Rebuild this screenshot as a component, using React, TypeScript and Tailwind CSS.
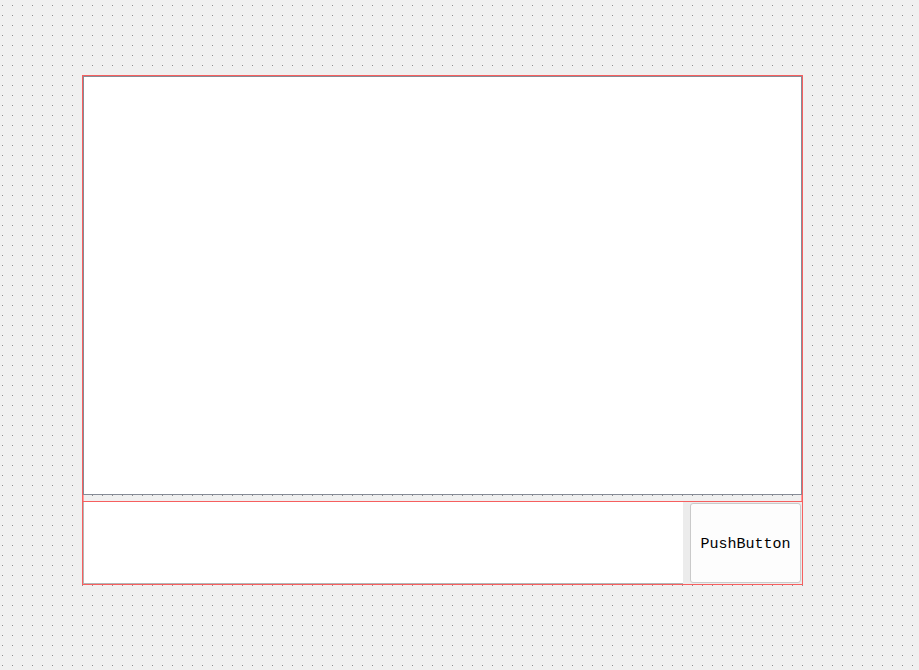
export default function App() {
  return (
    <div className="h-[670px] w-full overflow-hidden bg-[#f0f0f0] bg-[radial-gradient(circle_at_0.5px_0.5px,#8e8e8e_0.75px,transparent_0.75px)] bg-[size:10px_10px] bg-[position:2px_5px] pt-[75px] pl-[82px]">
      <div className="flex h-[510px] w-[721px] flex-col border border-[#f65f5f] shadow-[inset_1px_0_0_#ff9c9c,inset_-1px_0_0_#ff9c9c]">
        {/* text edit */}
        <div className="h-[419px] border border-[#868b96] bg-white" />
        <div className="h-[6px]" />
        {/* horizontal layout */}
        <div className="flex flex-1 border-t border-[#f65f5f]">
          <div className="w-[600px] border-b border-l border-[#b4b4b4] bg-white" />
          <div className="flex flex-1 bg-[#ececec] py-px pl-[7px] pr-px">
            <button className="flex w-[111px] items-center justify-center rounded-[3px] border border-[#cacaca] bg-[#fdfdfd] pt-[5px] font-['Liberation_Mono',monospace] text-[15px] text-black">
              PushButton
            </button>
          </div>
        </div>
      </div>
    </div>
  );
}
